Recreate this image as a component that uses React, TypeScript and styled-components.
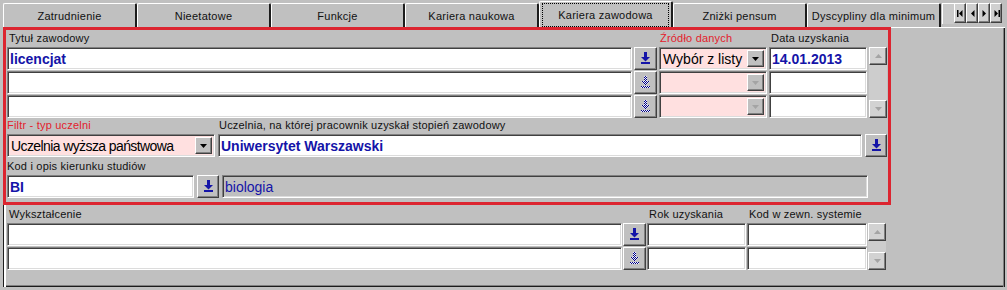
import React, { useId } from "react";
import styled, { createGlobalStyle, css } from "styled-components";

const C = {
  FACE: "#c0c0c0",
  SHADOW: "#808080",
  DARK: "#404040",
  EDGE: "#1c1c1c",
  LIGHT: "#ffffff",
  NAVY: "#1414a8",
  FRAME: "#dc2530",
  RED_TEXT: "#e3202c",
  PINK: "#ffe0e0",
  DISABLED: "#a4a4a4",
};

const TABS = [
  "Zatrudnienie",
  "Nieetatowe",
  "Funkcje",
  "Kariera naukowa",
  "Kariera zawodowa",
  "Zniżki pensum",
  "Dyscypliny dla minimum",
];

const GlobalStyle = createGlobalStyle`
  * { box-sizing: border-box; }
  html, body {
    margin: 0;
    padding: 0;
    background: ${C.FACE};
  }
  body {
    font-family: "Liberation Sans", Arial, sans-serif;
    font-size: 11px;
    color: #000;
  }
`;

const raised = css`
  background: ${C.FACE};
  border: 1px solid;
  border-color: ${C.LIGHT} ${C.DARK} ${C.DARK} ${C.LIGHT};
  box-shadow: inset -1px -1px 0 ${C.SHADOW};
`;

// small svg bits
const DownloadIcon = ({ disabled }: { disabled?: boolean }) => {
  const id = "d" + useId().replace(/[^a-zA-Z0-9]/g, "");
  const fill = disabled ? `url(#${id})` : C.NAVY;
  return (
    <svg width="9" height="12" viewBox="0 0 9 12">
      {disabled && (
        <defs>
          <pattern id={id} width="2" height="2" patternUnits="userSpaceOnUse">
            <rect width="2" height="2" fill="#f4f4ff" />
            <rect width="1" height="1" fill="#000080" />
            <rect x="1" y="1" width="1" height="1" fill="#000080" />
          </pattern>
        </defs>
      )}
      <rect x="3" y="0" width="3" height="5" fill={fill} />
      <polygon points="0,5 9,5 4.5,9.5" fill={fill} />
      <rect x="0" y="10" width="9" height="2" fill={fill} />
    </svg>
  );
};

const Triangle = ({ up, color }: { up?: boolean; color: string }) => (
  <svg width="7" height="4" viewBox="0 0 7 4">
    <polygon points={up ? "0,4 7,4 3.5,0" : "0,0 7,0 3.5,4"} fill={color} />
  </svg>
);

const NavGlyph = ({ kind }: { kind: "first" | "prev" | "next" | "last" }) => (
  <svg width="7" height="7" viewBox="0 0 7 7">
    {kind === "first" && <rect x="0" y="0" width="1.5" height="7" fill="#000" />}
    {kind === "last" && <rect x="5.5" y="0" width="1.5" height="7" fill="#000" />}
    {(kind === "first" || kind === "prev") && <polygon points="5.5,0 5.5,7 2,3.5" fill="#000" />}
    {(kind === "next" || kind === "last") && <polygon points="1.5,0 1.5,7 5,3.5" fill="#000" />}
  </svg>
);

const ScrollColumn = ({ span }: { span: string }) => (
  <ScrollBar $span={span}>
    <ScrollArrow>
      <Triangle up color={C.DISABLED} />
    </ScrollArrow>
    <ScrollArrow>
      <Triangle color={C.DISABLED} />
    </ScrollArrow>
  </ScrollBar>
);

const App = () => {
  return (
    <Window>
      <GlobalStyle />
      <TabBar>
        {TABS.map((t) => (
          <Tab key={t} $active={t === "Kariera zawodowa"}>
            <TabLabel $focused={t === "Kariera zawodowa"}>{t}</TabLabel>
          </Tab>
        ))}
        <BlankTab />
        <NavGroup>
          {(["first", "prev", "next", "last"] as const).map((k) => (
            <NavButton key={k}>
              <NavGlyph kind={k} />
            </NavButton>
          ))}
        </NavGroup>
      </TabBar>

      <TabPage>
        <Frame>
          <Grid $cols="625px 23px 108px 98px 18px" $rows="16px 23px 23px 23px" $gap={2}>
            <Label>Tytuł zawodowy</Label>
            <span />
            <Label $red $pad={1}>Źródło danych</Label>
            <Label>Data uzyskania</Label>
            <span />
            <ScrollColumn span="2 / span 3" />

            <Field $bold>licencjat</Field>
            <IconButton>
              <DownloadIcon />
            </IconButton>
            <Combo $bg={C.PINK}>
              <ComboText>Wybór z listy</ComboText>
              <DropButton>
                <Triangle color="#000" />
              </DropButton>
            </Combo>
            <Field $bold>14.01.2013</Field>

            <Field />
            <IconButton>
              <DownloadIcon disabled />
            </IconButton>
            <Combo $bg={C.PINK}>
              <ComboText />
              <DropButton>
                <Triangle color={C.DISABLED} />
              </DropButton>
            </Combo>
            <Field />

            <Field />
            <IconButton>
              <DownloadIcon disabled />
            </IconButton>
            <Combo $bg={C.PINK}>
              <ComboText />
              <DropButton>
                <Triangle color={C.DISABLED} />
              </DropButton>
            </Combo>
            <Field />
          </Grid>

          <Grid $cols="208px 644px 22px" $rows="15px 23px" $gap={3}>
            <Label $red $pad={0}>Filtr - typ uczelni</Label>
            <Label $pad={1}>Uczelnia, na której pracownik uzyskał stopień zawodowy</Label>
            <span />
            <Combo $bg={C.PINK}>
              <ComboText $tight>Uczelnia wyższa państwowa</ComboText>
              <DropButton>
                <Triangle color="#000" />
              </DropButton>
            </Combo>
            <Field $bold>Uniwersytet Warszawski</Field>
            <IconButton>
              <DownloadIcon />
            </IconButton>
          </Grid>

          <Grid $cols="187px 22px 646px" $rows="17px 23px" $gap={3}>
            <Label $pad={0} $wide>Kod i opis kierunku studiów</Label>
            <Field $bold>BI</Field>
            <IconButton>
              <DownloadIcon />
            </IconButton>
            <Field $bg={C.FACE}>biologia</Field>
          </Grid>
        </Frame>

        <Section>
          <Grid $cols="615px 23px 99px 120px 18px" $rows="17px 23px 23px" $gap={1}>
            <Label>Wykształcenie</Label>
            <span />
            <Label>Rok uzyskania</Label>
            <Label>Kod w zewn. systemie</Label>
            <span />
            <ScrollColumn span="2 / span 2" />

            <Field />
            <IconButton>
              <DownloadIcon />
            </IconButton>
            <Field />
            <Field />

            <Field />
            <IconButton>
              <DownloadIcon disabled />
            </IconButton>
            <Field />
            <Field />
          </Grid>
        </Section>
      </TabPage>
    </Window>
  );
};

const Window = styled.div`
  width: 1007px;
  height: 290px;
  display: flex;
  flex-direction: column;
  background: ${C.FACE};
`;

const TabBar = styled.div`
  display: flex;
  align-items: flex-end;
  height: 27px;
  padding-left: 3px;
`;

const Tab = styled.div<{ $active?: boolean }>`
  width: 134px;
  height: ${(p) => (p.$active ? 26 : 24)}px;
  padding: ${(p) => (p.$active ? "1px 2px 0 2px" : "1px 2px 1px 2px")};
  display: flex;
  border-top: 1px solid ${C.LIGHT};
  border-left: 1px solid ${C.LIGHT};
  border-right: 2px solid ${C.EDGE};
  border-radius: 2px 2px 0 0;
  font-size: 11px;
  letter-spacing: 0.25px;
  color: #111;
`;

const TabLabel = styled.span<{ $focused?: boolean }>`
  flex: 1;
  display: flex;
  align-items: center;
  justify-content: center;
  white-space: nowrap;
  border: 1px dotted ${(p) => (p.$focused ? "#000" : "transparent")};
`;

const BlankTab = styled.div`
  width: 12px;
  height: 21px;
  margin: 0 0 3px 1px;
  background: #cacaca;
  border-top: 1px solid ${C.LIGHT};
  border-left: 1px solid ${C.LIGHT};
`;

const NavGroup = styled.div`
  display: flex;
  margin-bottom: 4px;
`;

const NavButton = styled.div`
  ${raised};
  width: 12px;
  height: 20px;
  display: flex;
  align-items: center;
  justify-content: center;
  background: #d0d0d0;
`;

const TabPage = styled.div`
  margin-left: 3px;
  width: 1002px;
  height: 260px;
  display: flex;
  flex-direction: column;
  box-shadow: inset 1px 0 0 ${C.EDGE}, inset 3px 0 0 ${C.LIGHT}, inset 0 1px 0 ${C.LIGHT},
    inset -1px 0 0 ${C.EDGE}, inset -2px 0 0 ${C.SHADOW}, inset 0 -1px 0 ${C.EDGE},
    inset 0 -2px 0 ${C.SHADOW};
`;

const Frame = styled.section`
  width: 888px;
  height: 178px;
  border: 3px solid ${C.FRAME};
  padding: 0 1px;
  display: flex;
  flex-direction: column;
`;

const Section = styled.section`
  padding-left: 4px;
`;

const Grid = styled.div<{ $cols: string; $rows: string; $gap: number }>`
  display: grid;
  grid-template-columns: ${(p) => p.$cols};
  grid-template-rows: ${(p) => p.$rows};
  column-gap: ${(p) => p.$gap}px;
  row-gap: 1px;
`;

const Label = styled.div<{ $red?: boolean; $pad?: number; $wide?: boolean }>`
  display: flex;
  align-items: flex-end;
  padding: 0 0 1px ${(p) => p.$pad ?? 2}px;
  font-size: 11px;
  line-height: 13px;
  letter-spacing: 0.2px;
  white-space: nowrap;
  color: ${(p) => (p.$red ? C.RED_TEXT : "#111")};
  ${(p) => p.$wide && "grid-column: 1 / -1;"}
`;

const Field = styled.div<{ $bg?: string; $bold?: boolean }>`
  display: flex;
  align-items: center;
  min-width: 0;
  padding: 1px 2px 0 2px;
  background: ${(p) => p.$bg ?? C.LIGHT};
  border: 1px solid;
  border-color: ${C.SHADOW} ${C.LIGHT} ${C.LIGHT} ${C.SHADOW};
  box-shadow: inset 1px 1px 0 ${C.DARK}, inset -1px -1px 0 #dcdcdc;
  font-size: 14px;
  font-weight: ${(p) => (p.$bold ? 700 : 400)};
  color: ${C.NAVY};
  white-space: nowrap;
  overflow: hidden;
`;

const Combo = styled(Field)`
  padding: 2px 2px 2px 2px;
  color: #000;
  font-weight: 400;
`;

const ComboText = styled.span<{ $tight?: boolean }>`
  flex: 1;
  padding: 1px 0 0 1px;
  letter-spacing: ${(p) => (p.$tight ? "-0.6px" : "0")};
`;

const DropButton = styled.div`
  ${raised};
  width: 17px;
  height: 100%;
  display: flex;
  align-items: center;
  justify-content: center;
`;

const IconButton = styled.div`
  ${raised};
  display: flex;
  align-items: center;
  justify-content: center;
  padding-bottom: 1px;
`;

const ScrollBar = styled.div<{ $span: string }>`
  grid-column: 5;
  grid-row: ${(p) => p.$span};
  display: flex;
  flex-direction: column;
  justify-content: space-between;
  background: #cdcdcd;
`;

const ScrollArrow = styled.div`
  ${raised};
  height: 18px;
  display: flex;
  align-items: center;
  justify-content: center;
  background: #d2d2d2;
`;

export default App;
